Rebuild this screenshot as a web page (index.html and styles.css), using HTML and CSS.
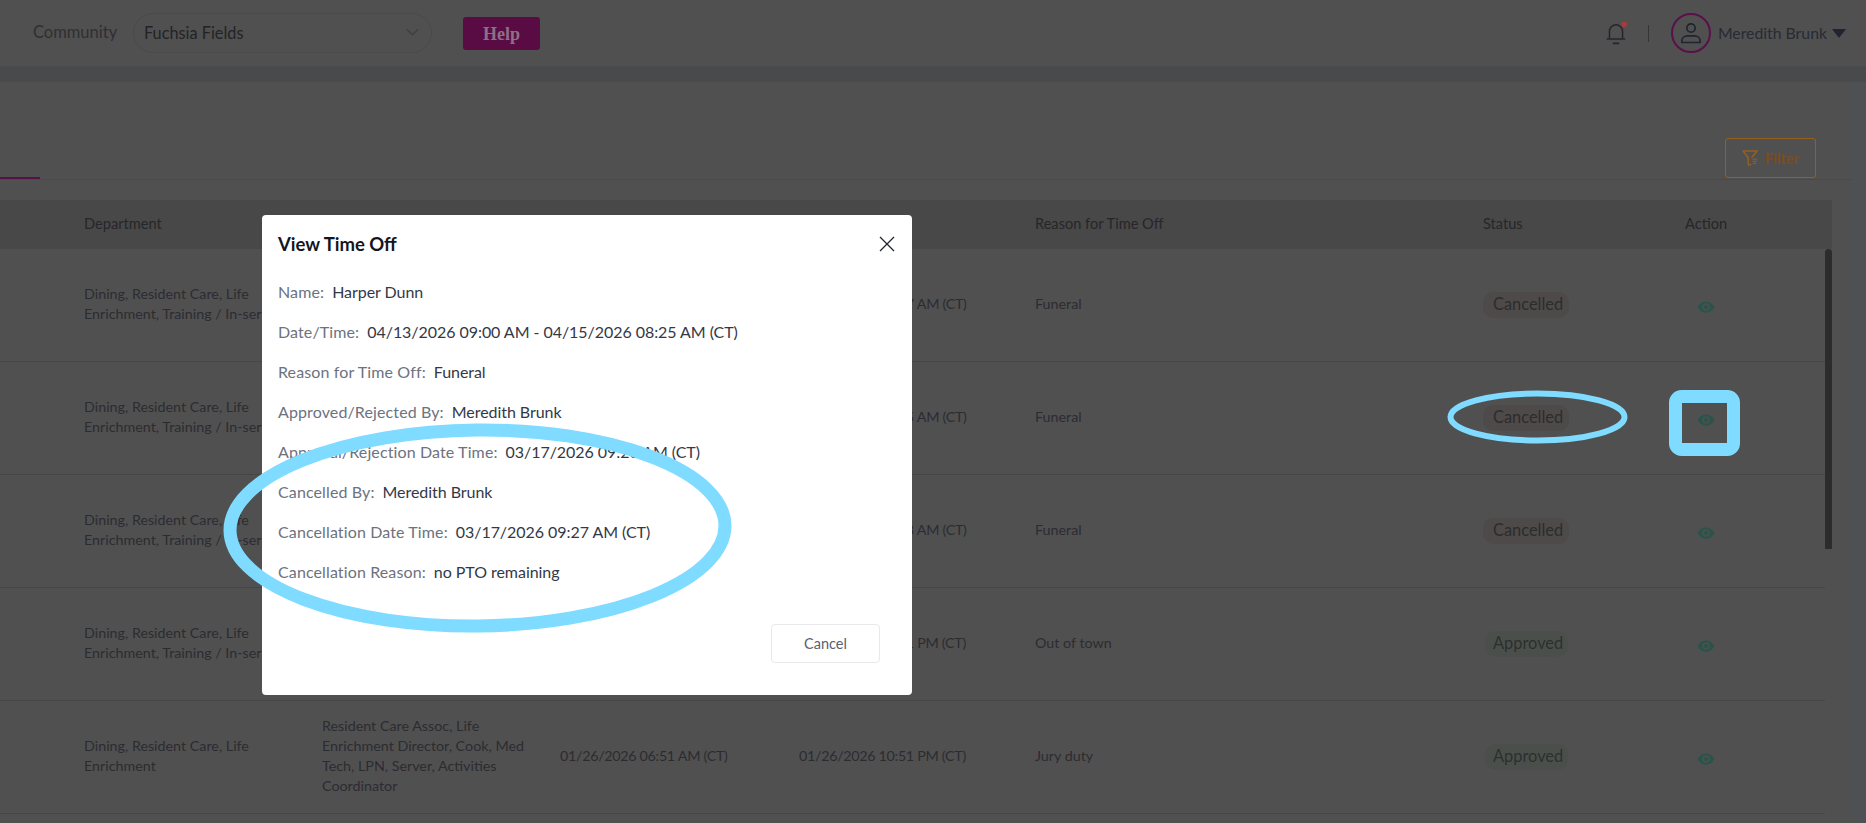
FILE: index.html
```html
<!DOCTYPE html>
<html lang="en">
<head>
<meta charset="utf-8">
<title>View Time Off</title>
<link rel="stylesheet" href="styles.css">
</head>
<body>
<header class="topbar">
  <div class="topbar-left">
    <span class="community-label">Community</span>
    <div class="community-select">
      <span>Fuchsia Fields</span>
      <svg class="chevron" viewBox="0 0 14 8" width="13" height="8"><path d="M1 1l6 6 6-6" fill="none" stroke="#3f3f42" stroke-width="1.4"/></svg>
    </div>
    <button class="help-btn">Help</button>
  </div>
  <div class="topbar-right">
    <svg class="bell" viewBox="0 0 22 22" width="24" height="24">
      <path d="M5 16V9.5a6 6 0 0 1 12 0V16" fill="none" stroke="#24262c" stroke-width="1.4"/>
      <path d="M2.5 16.5h17M8 20.5h6" fill="none" stroke="#24262c" stroke-width="1.4"/>
      <circle cx="18.5" cy="3" r="2.6" fill="#a83a3a"/>
    </svg>
    <span class="divider"></span>
    <span class="avatar">
      <svg viewBox="0 0 24 24" width="24" height="24">
        <circle cx="12" cy="7" r="4.2" fill="none" stroke="#1f2430" stroke-width="1.7"/>
        <path d="M2.8 21.5v-1.6c0-3 2.6-5 5.6-5h7.2c3 0 5.6 2 5.6 5v1.6z" fill="none" stroke="#1f2430" stroke-width="1.7" stroke-linejoin="round"/>
      </svg>
    </span>
    <span class="user-name">Meredith Brunk</span>
    <svg class="caret" viewBox="0 0 14 9" width="14" height="9"><path d="M0 0h14L7 9z" fill="#1f2430"/></svg>
  </div>
</header>
<div class="band"></div>
<main class="card">
  <div class="toolbar">
    <span class="active-tab"></span>
    <button class="filter-btn">
      <svg viewBox="0 0 16 16" width="16" height="16">
        <path d="M.8 1h14.4L9.6 7.4" fill="none" stroke="#95601f" stroke-width="1.5" stroke-linejoin="round"/>
        <path d="M.8 1l5.4 6.4v6.8c0 .9 1 1.3 1.7.8l1.2-.9" fill="none" stroke="#95601f" stroke-width="1.5" stroke-linejoin="round"/>
        <path d="M10.5 9.2h4.5M10.5 11.3h4.5M10.5 13.4h3.5" fill="none" stroke="#95601f" stroke-width="1"/>
      </svg>
      <span>Filter</span>
    </button>
  </div>
  <section class="table">
    <div class="row head">
      <div>Department</div><div>Job Title</div><div>Start Date/Time</div><div>End Date/Time</div><div>Reason for Time Off</div><div>Status</div><div>Action</div>
    </div>
    <div class="table-body">
      <span class="thumb"></span>
      <div class="row">
        <div>Dining, Resident Care, Life Enrichment, Training / In-service</div><div>Resident Care Assoc</div><div>04/13/2026 09:00 AM (CT)</div><div>04/15/2026 08:27 AM (CT)</div><div>Funeral</div>
        <div><span class="pill cancelled">Cancelled</span></div>
        <div><svg class="eye" viewBox="0 0 24 24" width="18" height="18"><path d="M12 4.5C7 4.5 2.73 7.61 1 12c1.73 4.39 6 7.5 11 7.5s9.27-3.11 11-7.5c-1.73-4.39-6-7.5-11-7.5zM12 17c-2.76 0-5-2.24-5-5s2.24-5 5-5 5 2.24 5 5-2.24 5-5 5zm0-8c-1.66 0-3 1.34-3 3s1.34 3 3 3 3-1.34 3-3-1.34-3-3-3z"/></svg></div>
      </div>
      <div class="row">
        <div>Dining, Resident Care, Life Enrichment, Training / In-service</div><div>Resident Care Assoc</div><div>04/13/2026 09:00 AM (CT)</div><div>04/15/2026 08:25 AM (CT)</div><div>Funeral</div>
        <div><span class="pill cancelled">Cancelled</span></div>
        <div><svg class="eye" viewBox="0 0 24 24" width="18" height="18"><path d="M12 4.5C7 4.5 2.73 7.61 1 12c1.73 4.39 6 7.5 11 7.5s9.27-3.11 11-7.5c-1.73-4.39-6-7.5-11-7.5zM12 17c-2.76 0-5-2.24-5-5s2.24-5 5-5 5 2.24 5 5-2.24 5-5 5zm0-8c-1.66 0-3 1.34-3 3s1.34 3 3 3 3-1.34 3-3-1.34-3-3-3z"/></svg></div>
      </div>
      <div class="row">
        <div>Dining, Resident Care, Life Enrichment, Training / In-service</div><div>Resident Care Assoc</div><div>04/13/2026 09:00 AM (CT)</div><div>04/15/2026 08:23 AM (CT)</div><div>Funeral</div>
        <div><span class="pill cancelled">Cancelled</span></div>
        <div><svg class="eye" viewBox="0 0 24 24" width="18" height="18"><path d="M12 4.5C7 4.5 2.73 7.61 1 12c1.73 4.39 6 7.5 11 7.5s9.27-3.11 11-7.5c-1.73-4.39-6-7.5-11-7.5zM12 17c-2.76 0-5-2.24-5-5s2.24-5 5-5 5 2.24 5 5-2.24 5-5 5zm0-8c-1.66 0-3 1.34-3 3s1.34 3 3 3 3-1.34 3-3-1.34-3-3-3z"/></svg></div>
      </div>
      <div class="row">
        <div>Dining, Resident Care, Life Enrichment, Training / In-service</div><div>Resident Care Assoc</div><div>02/10/2026 06:51 AM (CT)</div><div>02/10/2026 10:51 PM (CT)</div><div>Out of town</div>
        <div><span class="pill approved">Approved</span></div>
        <div><svg class="eye" viewBox="0 0 24 24" width="18" height="18"><path d="M12 4.5C7 4.5 2.73 7.61 1 12c1.73 4.39 6 7.5 11 7.5s9.27-3.11 11-7.5c-1.73-4.39-6-7.5-11-7.5zM12 17c-2.76 0-5-2.24-5-5s2.24-5 5-5 5 2.24 5 5-2.24 5-5 5zm0-8c-1.66 0-3 1.34-3 3s1.34 3 3 3 3-1.34 3-3-1.34-3-3-3z"/></svg></div>
      </div>
      <div class="row">
        <div>Dining, Resident Care, Life Enrichment</div><div>Resident Care Assoc, Life Enrichment Director, Cook, Med Tech, LPN, Server, Activities Coordinator</div><div>01/26/2026 06:51 AM (CT)</div><div>01/26/2026 10:51 PM (CT)</div><div>Jury duty</div>
        <div><span class="pill approved">Approved</span></div>
        <div><svg class="eye" viewBox="0 0 24 24" width="18" height="18"><path d="M12 4.5C7 4.5 2.73 7.61 1 12c1.73 4.39 6 7.5 11 7.5s9.27-3.11 11-7.5c-1.73-4.39-6-7.5-11-7.5zM12 17c-2.76 0-5-2.24-5-5s2.24-5 5-5 5 2.24 5 5-2.24 5-5 5zm0-8c-1.66 0-3 1.34-3 3s1.34 3 3 3 3-1.34 3-3-1.34-3-3-3z"/></svg></div>
      </div>
    </div>
  </section>
</main>

<div class="modal">
  <div class="modal-head">
    <h2>View Time Off</h2>
    <svg class="close" viewBox="0 0 16 16" width="16" height="16"><path d="M1 1l14 14M15 1L1 15" fill="none" stroke="#1f2430" stroke-width="1.3"/></svg>
  </div>
  <dl class="details">
    <div><dt>Name:</dt><dd>Harper Dunn</dd></div>
    <div><dt>Date/Time:</dt><dd>04/13/2026 09:00 AM - 04/15/2026 08:25 AM (CT)</dd></div>
    <div><dt>Reason for Time Off:</dt><dd>Funeral</dd></div>
    <div><dt>Approved/Rejected By:</dt><dd>Meredith Brunk</dd></div>
    <div><dt>Approval/Rejection Date Time:</dt><dd>03/17/2026 09:26 AM (CT)</dd></div>
    <div><dt>Cancelled By:</dt><dd>Meredith Brunk</dd></div>
    <div><dt>Cancellation Date Time:</dt><dd>03/17/2026 09:27 AM (CT)</dd></div>
    <div><dt>Cancellation Reason:</dt><dd>no PTO remaining</dd></div>
  </dl>
  <div class="modal-foot"><button class="cancel-btn">Cancel</button></div>
</div>

<svg class="annotations" viewBox="0 0 1866 823" width="1866" height="823">
  <ellipse cx="477.5" cy="528" rx="247.5" ry="98" transform="rotate(-0.6 477.5 528)"/>
  <ellipse class="thin" cx="1537.5" cy="417" rx="87" ry="23.5"/>
  <rect class="box" x="1675.5" y="396.5" width="58" height="53" rx="6"/>
</svg>
</body>
</html>
```
FILE: styles.css
```css
* { box-sizing: border-box; }
html, body { margin: 0; height: 823px; overflow: hidden; }
body {
  background: #4e5153;
  font-family: "Lato", "Liberation Sans", sans-serif;
  color: #2c2c30;
  font-size: 14.3px;
  width: 1866px;
  position: relative;
}
button { font-family: inherit; }

.topbar {
  height: 67px;
  background: #505050;
  border-bottom: 1px solid #4a4a4a;
  display: flex;
  align-items: center;
  justify-content: space-between;
  padding: 0 20px 0 33px;
}
.topbar-left, .topbar-right { display: flex; align-items: center; }
.community-label { font-size: 16.5px; color: #2f2f33; width: 100px; padding-bottom: 2px; }
.community-select {
  width: 299px;
  height: 40px;
  border: 1px solid #4a4a4a;
  border-radius: 20px;
  padding: 0 12px 2px 10px;
  display: flex;
  align-items: center;
  justify-content: space-between;
  font-size: 16.3px;
  color: #232327;
}
.help-btn {
  margin-left: 31px;
  width: 77px;
  height: 33px;
  border: 0;
  border-radius: 3px;
  background: #590c44;
  color: #8f6f85;
  font: bold 18px "Liberation Serif", serif;
  padding: 3px 0 0;
}
.bell { margin-right: 20px; }
.divider { width: 1px; height: 17px; background: #33353a; margin-right: 22px; }
.avatar {
  width: 40px;
  height: 40px;
  border-radius: 50%;
  border: 2px solid #5a1048;
  display: flex;
  align-items: center;
  justify-content: center;
  margin-right: 7px;
}
.user-name { font-size: 15.8px; color: #272b34; margin-right: 5px; padding-bottom: 2px; }

.band { height: 15px; background: #484a4c; }

.card {
  width: 1852px;
  height: 741px;
  background: #505050;
}
.toolbar {
  height: 98px;
  border-bottom: 1px solid #4a4a4a;
  display: flex;
  align-items: flex-end;
  justify-content: space-between;
  padding: 0 36px 0 0;
}
.active-tab { width: 40px; height: 2px; background: #5a1048; }
.filter-btn {
  width: 91px;
  height: 40px;
  margin-bottom: 1px;
  background: transparent;
  border: 1px solid #95601f;
  border-radius: 3px;
  color: #7d4c22;
  font-size: 14.5px;
  font-weight: 700;
  display: flex;
  align-items: center;
  justify-content: center;
  gap: 7px;
}

.table { margin: 20px 20px 0 0; }
.row {
  display: grid;
  grid-template-columns: 238px 238px 239px 236px 448px 202px 140px;
  padding: 0 0 2px 84px;
  align-items: center;
  height: 113px;
  border-bottom: 1px solid #464646;
  line-height: 20px;
  color: #2c2c30;
  width: 1825px;
}
.row > div:first-child, .row > div:nth-child(2) { padding-right: 30px; }
.row > div:nth-child(3), .row > div:nth-child(4) { letter-spacing: -.3px; }
.row.head {
  height: 49px;
  width: 1832px;
  background: #484848;
  border-bottom: 0;
  color: #262628;
  font-size: 14.6px;
}
.row.head > div { letter-spacing: 0; }
.table-body { position: relative; }
.thumb {
  position: absolute;
  left: 1825px;
  top: 0;
  width: 7px;
  height: 300px;
  background: #2c2c2c;
  border-radius: 4px 4px 0 0;
}
.pill {
  display: inline-block;
  margin-top: 2px;
  font-size: 16.4px;
  line-height: 23px;
  height: 26px;
  padding: 0 6px 0 10px;
  border-radius: 10px;
  color: #2c2c2e;
}
.pill.cancelled { background: #4e4a49; }
.pill.approved { background: #4b4f4c; color: #2b302f; margin-left: 2px; padding: 0 5px 0 8px; }
.eye { fill: #2a5449; display: block; margin: 6px 0 0 12px; }

.modal {
  position: absolute;
  left: 262px;
  top: 215px;
  width: 650px;
  height: 480px;
  background: #fff;
  border-radius: 4px;
  padding: 0 32px 0 16px;
  display: flex;
  flex-direction: column;
}
.modal-head {
  height: 56px;
  padding-top: 2px;
  display: flex;
  align-items: center;
  justify-content: space-between;
  margin-right: -15px;
}
.modal-head h2 { margin: 0; font-size: 18.5px; font-weight: 700; color: #14161f; }
.details { margin: 0; padding-top: 0; }
.details > div { display: flex; height: 40px; align-items: center; gap: 8px; font-size: 16px; }
.details dt { color: #6c7280; letter-spacing: .12px; }
.details dd { margin: 0; color: #333847; letter-spacing: -.05px; }
.modal-foot { display: flex; justify-content: flex-end; margin-top: 33px; }
.cancel-btn {
  width: 109px;
  height: 39px;
  background: #fff;
  border: 1px solid #e9e9ec;
  border-radius: 4px;
  color: #5b6070;
  font-size: 14.5px;
}

.annotations { position: absolute; left: 0; top: 0; pointer-events: none; }
.annotations ellipse { fill: none; stroke: #7fdbff; stroke-width: 13; }
.annotations ellipse.thin { stroke-width: 6; }
.annotations .box { fill: none; stroke: #7fdbff; stroke-width: 13; }
```
